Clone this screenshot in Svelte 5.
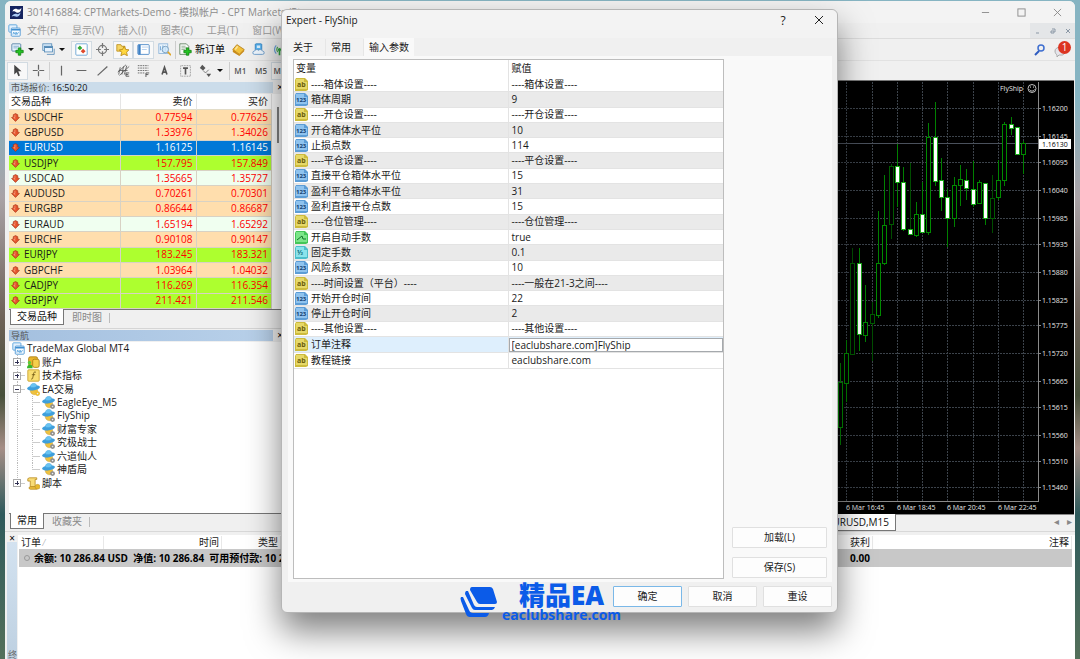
<script lang="ts">
	type Quote = { symbol: string; bid: string; ask: string; tone: 'peach' | 'green' | 'mint' | 'selected' };
	type Param = { kind: 'ab' | 'int' | 'bool' | 'real'; name: string; value: string };
	type TreeNode = { label: string; level: number; icon: string; toggle?: string; last?: boolean };

	const menus = ['文件(F)', '显示(V)', '插入(I)', '图表(C)', '工具(T)', '窗口(W)'];

	const panelTools = [
		{ icon: 'watch', label: '市场报价', on: true },
		{ icon: 'target', label: '数据窗口', on: false },
		{ icon: 'star', label: '导航', on: true },
		{ icon: 'terminal', label: '终端', on: true },
		{ icon: 'tester', label: '策略测试', on: false }
	];
	const serviceTools = [
		{ icon: 'gold', label: 'MetaEditor' },
		{ icon: 'cloud', label: '虚拟主机' },
		{ icon: 'signal', label: '信号' }
	];
	const lineTools = ['vline', 'hline', 'trend', 'channel', 'fibo', 'letter', 'label', 'arrows'];

	const quotes: Quote[] = [
		{ symbol: 'USDCHF', bid: '0.77594', ask: '0.77625', tone: 'peach' },
		{ symbol: 'GBPUSD', bid: '1.33976', ask: '1.34026', tone: 'peach' },
		{ symbol: 'EURUSD', bid: '1.16125', ask: '1.16145', tone: 'selected' },
		{ symbol: 'USDJPY', bid: '157.795', ask: '157.849', tone: 'green' },
		{ symbol: 'USDCAD', bid: '1.35665', ask: '1.35727', tone: 'mint' },
		{ symbol: 'AUDUSD', bid: '0.70261', ask: '0.70301', tone: 'peach' },
		{ symbol: 'EURGBP', bid: '0.86644', ask: '0.86687', tone: 'peach' },
		{ symbol: 'EURAUD', bid: '1.65194', ask: '1.65292', tone: 'mint' },
		{ symbol: 'EURCHF', bid: '0.90108', ask: '0.90147', tone: 'peach' },
		{ symbol: 'EURJPY', bid: '183.245', ask: '183.321', tone: 'green' },
		{ symbol: 'GBPCHF', bid: '1.03964', ask: '1.04032', tone: 'peach' },
		{ symbol: 'CADJPY', bid: '116.269', ask: '116.354', tone: 'green' },
		{ symbol: 'GBPJPY', bid: '211.421', ask: '211.546', tone: 'green' }
	];

	const tree: TreeNode[] = [
		{ label: 'TradeMax Global MT4', level: 0, icon: 'charts' },
		{ label: '账户', level: 1, icon: 'account', toggle: '+' },
		{ label: '技术指标', level: 1, icon: 'indicator', toggle: '+' },
		{ label: 'EA交易', level: 1, icon: 'expert', toggle: '-' },
		{ label: 'EagleEye_M5', level: 2, icon: 'expertOff' },
		{ label: 'FlyShip', level: 2, icon: 'expertOff' },
		{ label: '财富专家', level: 2, icon: 'expertOff' },
		{ label: '究极战士', level: 2, icon: 'expertOff' },
		{ label: '六道仙人', level: 2, icon: 'expertOff' },
		{ label: '神盾局', level: 2, icon: 'expertOff', last: true },
		{ label: '脚本', level: 1, icon: 'script', toggle: '+', last: true }
	];

	const params: Param[] = [
		{ kind: 'ab', name: '----箱体设置----', value: '----箱体设置----' },
		{ kind: 'int', name: '箱体周期', value: '9' },
		{ kind: 'ab', name: '----开仓设置----', value: '----开仓设置----' },
		{ kind: 'int', name: '开仓箱体水平位', value: '10' },
		{ kind: 'int', name: '止损点数', value: '114' },
		{ kind: 'ab', name: '----平仓设置----', value: '----平仓设置----' },
		{ kind: 'int', name: '直接平仓箱体水平位', value: '15' },
		{ kind: 'int', name: '盈利平仓箱体水平位', value: '31' },
		{ kind: 'int', name: '盈利直接平仓点数', value: '15' },
		{ kind: 'ab', name: '----仓位管理----', value: '----仓位管理----' },
		{ kind: 'bool', name: '开启自动手数', value: 'true' },
		{ kind: 'real', name: '固定手数', value: '0.1' },
		{ kind: 'int', name: '风险系数', value: '10' },
		{ kind: 'ab', name: '----时间设置（平台）----', value: '----一般在21-3之间----' },
		{ kind: 'int', name: '开始开仓时间', value: '22' },
		{ kind: 'int', name: '停止开仓时间', value: '2' },
		{ kind: 'ab', name: '----其他设置----', value: '----其他设置----' },
		{ kind: 'ab', name: '订单注释', value: '[eaclubshare.com]FlyShip' },
		{ kind: 'ab', name: '教程链接', value: 'eaclubshare.com' }
	];
	const striped = [1, 3, 5, 7, 9, 11, 13, 15];
	let editing = $state(17);
	let comment = $state('[eaclubshare.com]FlyShip');

	// x, high, body top, body bottom, low, filled, dim
	const candles: [number, number, number, number, number, number, number][] = [
		[840, 363, 382, 427, 445, 0, 0],
		[846, 340, 353, 383, 402, 0, 0],
		[852, 248, 263, 354, 354, 0, 1],
		[859, 248, 263, 334, 351, 1, 0],
		[865, 285, 322, 335, 342, 0, 0],
		[872, 302, 314, 323, 361, 0, 1],
		[878, 211, 263, 315, 318, 0, 0],
		[884, 175, 225, 263, 265, 0, 0],
		[891, 164, 166, 224, 239, 0, 1],
		[897, 144, 166, 182, 207, 1, 0],
		[903, 167, 182, 229, 231, 1, 0],
		[910, 163, 229, 234, 234, 1, 1],
		[916, 202, 214, 235, 237, 0, 0],
		[922, 182, 214, 232, 233, 1, 0],
		[928, 123, 137, 232, 235, 0, 0],
		[935, 102, 137, 181, 186, 1, 0],
		[941, 158, 180, 197, 211, 1, 0],
		[947, 189, 197, 218, 247, 1, 0],
		[954, 177, 185, 218, 227, 0, 0],
		[960, 165, 179, 185, 206, 0, 0],
		[966, 169, 180, 188, 200, 1, 0],
		[973, 161, 189, 204, 207, 1, 0],
		[979, 180, 182, 203, 203, 0, 0],
		[985, 183, 183, 218, 225, 1, 0],
		[992, 175, 198, 218, 233, 0, 1],
		[998, 160, 180, 197, 200, 0, 0],
		[1004, 122, 124, 180, 186, 0, 0],
		[1011, 117, 124, 128, 135, 1, 0],
		[1017, 127, 127, 154, 154, 1, 0],
		[1023, 141, 143, 154, 174, 0, 0]
	];
	const levels: [number, string][] = [
		[108, '1.16200'], [136, '1.16145'], [162, '1.16095'], [190, '1.16040'], [218, '1.15985'],
		[244, '1.15935'], [272, '1.15880'], [300, '1.15825'], [325, '1.15775'], [353, '1.15720'],
		[381, '1.15665'], [407, '1.15615'], [435, '1.15560'], [461, '1.15510'], [487, '1.15460']
	];
	const gridX = [846, 872, 897, 922, 947, 973, 998, 1023];
	const times: [number, string][] = [
		[846, '6 Mar 16:45'], [897, '6 Mar 18:45'], [947, '6 Mar 20:45'], [998, '6 Mar 22:45']
	];
</script>

{#snippet icon(name: string)}
	<svg class="icon" viewBox="0 0 16 16" fill="none" aria-hidden="true">
		{#if name === 'app'}
			<rect width="16" height="16" fill="#14235f" />
			<path d="M3 7c1-4 4-4 6-3 2 1 4 0 5-2 0 5-3 7-6 6-2-1-3-2-5-1z" fill="#fff" />
			<path d="M2 13c2-4 5-4 7-3 2 0 3-1 4-2-1 5-4 6-6 5-2-1-3-1-5 0z" fill="#a9c8f4" />
		{:else if name === 'charts'}
			<rect x="1" y="1" width="10" height="9" rx="1" fill="#e3f1fd" stroke="#4b9bd9" />
			<rect x="4" y="5" width="11" height="10" rx="1" fill="#f4faff" stroke="#3f8ed0" />
			<path d="M4 7h11" stroke="#3f8ed0" stroke-width="2" />
			<path d="M6 13l1-3 2 3 1-3 1 3 2-3" stroke="#4b9bd9" />
		{:else if name === 'newChart'}
			<rect x="1" y="1" width="11" height="9" rx="1" fill="#e6f2fc" stroke="#46769c" />
			<path d="M3 4h7M3 6h5" stroke="#7da7c8" />
			<path d="M9 6h3v3h3v3h-3v3H9v-3H6V9h3z" fill="#22c322" stroke="#128412" />
		{:else if name === 'profiles'}
			<rect x="1" y="1" width="11" height="8" fill="#dceefc" stroke="#5288b5" />
			<rect x="3" y="4" width="10" height="7" fill="#e6f2fd" stroke="#5288b5" />
			<path d="M3 5h10" stroke="#5288b5" stroke-width="2" />
			<path d="M6 14h9V7" stroke="#5288b5" />
		{:else if name === 'watch'}
			<rect x="1" y="1" width="14" height="14" rx="1" fill="#fff" stroke="#5d9cd0" />
			<path d="M6 3l3 3-3 3-3-3z" fill="#32a832" />
			<path d="M10 7l3 3-3 3-3-3z" fill="#e04a2c" />
		{:else if name === 'target'}
			<circle cx="8" cy="8" r="5" stroke="#777" stroke-width="1.5" />
			<path d="M8 0v6M8 10v6M0 8h6M10 8h6" stroke="#777" stroke-width="1.5" />
		{:else if name === 'star'}
			<path d="M1 2h5l1 2h4v6H1z" fill="#f6d563" stroke="#b98c18" />
			<path d="M10 4l2 4 4 .4-3 3 1 4.2-4-2-4 2 1-4.2-3-3 4-.4z" fill="#ffd83f" stroke="#b48412" />
		{:else if name === 'terminal'}
			<rect x="1" y="2" width="14" height="12" rx="1" fill="#fff" stroke="#3b7fc4" />
			<path d="M3 2v12" stroke="#3b7fc4" stroke-width="3" />
			<path d="M6 5h8M6 8h6" stroke="#a6c7ea" />
		{:else if name === 'tester'}
			<rect x="1" y="1" width="11" height="12" fill="#e8f3fc" stroke="#88b2d8" />
			<path d="M3 9V4m3 6V3m3 7V5" stroke="#5c9bd2" />
			<circle cx="9" cy="8" r="4" fill="#cfe9fb" fill-opacity=".8" stroke="#6e94b5" />
			<path d="M12 11l4 4" stroke="#e0a526" stroke-width="2" />
		{:else if name === 'order'}
			<path d="M1 1h8l3 3v10H1z" fill="#f7fbf7" stroke="#5a7a5a" />
			<path d="M3 4h5M3 6h7M3 8h4" stroke="#8aa58a" />
			<path d="M9 6h3v3h3v3h-3v3H9v-3H6V9h3z" fill="#22c322" stroke="#128412" />
		{:else if name === 'gold'}
			<path d="M1 8l5-6 9 6-6 6z" fill="#f3c23c" stroke="#b27a10" />
			<path d="M1 8v3l8 5 6-6V8l-6 6z" fill="#c98a16" />
			<path d="M4 8l3-4" stroke="#fbe49a" stroke-width="2" />
		{:else if name === 'cloud'}
			<rect x="4" y="1" width="8" height="8" rx="1" fill="#58b4f0" stroke="#2c7fc0" />
			<path d="M6 3h4v3H6z" fill="#d9f0ff" />
			<path d="M3 14a2 2 0 0 1 0-4 3 3 0 0 1 5-1 3 3 0 0 1 5 1 2 2 0 0 1 0 4z" fill="#eef6fd" stroke="#5b93c6" />
		{:else if name === 'signal'}
			<path d="M4 3a7 7 0 0 0 0 10M12 3a7 7 0 0 1 0 10" stroke="#6aa2dc" stroke-width="1.5" />
			<path d="M6 5a4 4 0 0 0 0 6M10 5a4 4 0 0 1 0 6" stroke="#4fae5c" stroke-width="1.5" />
			<circle cx="8" cy="8" r="2" fill="#2fa53f" />
			<path d="M8 9v6" stroke="#2fa53f" stroke-width="2" />
		{:else if name === 'cursor'}
			<path d="M4 1v12l3-3 2 5 2-1-2-5h4z" fill="#444" />
		{:else if name === 'cross'}
			<path d="M8 1v6M8 9v6M1 8h6M9 8h6" stroke="#666" stroke-width="1.5" />
		{:else if name === 'vline'}
			<path d="M8 2v12" stroke="#666" stroke-width="1.5" />
		{:else if name === 'hline'}
			<path d="M2 8h12" stroke="#666" stroke-width="1.5" />
		{:else if name === 'trend'}
			<path d="M2 14L14 3" stroke="#666" stroke-width="1.5" />
		{:else if name === 'channel'}
			<path d="M1 10L11 1M3 14L15 3M4 4l-2 9M8 3L6 13M12 2l-3 11M2 8h11" stroke="#555" />
			<path d="M11 11h4M11 13h3M11 15h4M11 11v4" stroke="#444" />
		{:else if name === 'fibo'}
			<path d="M1 2h13M1 5h13M1 8h13M1 11h8" stroke="#555" stroke-dasharray="2 1" />
			<path d="M11 11h4M11 13h3M11 11v5" stroke="#444" />
		{:else if name === 'letter'}
			<path d="M5 13L8 4l3 9M6 10h4" stroke="#555" stroke-width="2" />
		{:else if name === 'label'}
			<rect x="2" y="2" width="12" height="13" stroke="#777" stroke-dasharray="1 1" />
			<path d="M5 5h6M8 5v8" stroke="#555" stroke-width="2" />
		{:else if name === 'arrows'}
			<path d="M4 1l4 4-3 3-4-3z" fill="#555" />
			<path d="M5 8l3 3 4-4" stroke="#666" />
			<path d="M9 12h6l-3 4z" fill="#555" />
		{:else if name === 'account'}
			<rect x="2" y="1" width="11" height="11" rx="2" fill="#e8b52c" stroke="#a97a10" />
			<rect x="7" y="4" width="8" height="10" rx="2" fill="#f5cf4b" stroke="#a97a10" />
			<circle cx="3" cy="8" r="2" fill="#54cf3c" />
			<path d="M0 15c0-6 7-6 7 0z" fill="#36b82a" />
		{:else if name === 'indicator'}
			<rect x="1" y="1" width="14" height="14" rx="1" fill="#f8de72" stroke="#c79d23" />
			<path d="M11 4c-2-1-3 0-3 3l-1 4c0 1-1 2-2 1M6 7h4" stroke="#6c5210" />
		{:else if name === 'expert' || name === 'expertOff'}
			<path d="M4 9c0 6 7 7 9 3l0-4z" fill="#eec13f" stroke="#b98a1d" stroke-width=".5" />
			<ellipse cx="8" cy="6" rx="8" ry="3" fill="#3e9fdc" transform="rotate(-8 8 6)" />
			<path d="M4 5c0-6 8-6 8-1-2 2-6 2-8 1z" fill="#69c3f2" stroke="#3e9fdc" stroke-width=".5" />
			<circle cx="13" cy="13" r="3" fill={name === 'expert' ? '#efbd2c' : '#8d8d8d'} />
			<circle cx="13" cy="13" r="1" fill="#eee" />
		{:else if name === 'script'}
			<path d="M3 1h9v2h-2v9H4V5H1V2z" fill="#f8dc77" stroke="#b98a1d" />
			<path d="M4 12c-2 0-2 3 0 3h8v-3z" fill="#eec13f" stroke="#b98a1d" />
			<circle cx="13" cy="12" r="3" fill="#e7b82d" stroke="#ab8018" stroke-width=".5" />
		{:else if name === 'down'}
			<path d="M8 15L1 8l3-1V3l4-2 4 2v4l3 1z" fill="#e4522a" stroke="#9a2b12" />
			<path d="M7 3v5H5l3 3" stroke="#ffb79a" />
		{/if}
	</svg>
{/snippet}

{#snippet kindIcon(kind: string)}
	<svg class="icon kind-icon" viewBox="0 0 13 13" aria-hidden="true">
		{#if kind === 'ab'}
			<path d="M1 0h9l3 3v9l-2 1H0V2z" fill="#cdbb3c" />
			<path d="M1 1h8v3h3v7H1z" fill="#e6d868" />
			<text x="2" y="9" font-size="7" font-weight="700" fill="#6b5d0c">ab</text>
		{:else if kind === 'int'}
			<path d="M1 0h9l3 3v9l-2 1H0V2z" fill="#5c9dd6" />
			<path d="M1 1h8v3h3v7H1z" fill="#8fc3ee" />
			<text x="1" y="9" font-size="6" font-weight="700" fill="#14406e">123</text>
		{:else if kind === 'bool'}
			<path d="M1 0h9l3 3v9l-2 1H0V2z" fill="#43c657" />
			<path d="M1 1h8v3h3v7H1z" fill="#7be588" />
			<path d="M2 9l5-4 1 3h3" fill="none" stroke="#12742a" />
		{:else}
			<path d="M1 0h9l3 3v9l-2 1H0V2z" fill="#4dbecb" />
			<path d="M1 1h8v3h3v7H1z" fill="#8be3ec" />
			<text x="2" y="9" font-size="7" font-weight="700" fill="#14707c">½</text>
		{/if}
	</svg>
{/snippet}

<div class="desktop">
	<div class="window">
		<header class="titlebar">
			{@render icon('app')}
			<h1>301416884: CPTMarkets-Demo - 模拟帐户 - CPT Markets (Pty</h1>
			<div class="window-buttons">
				<button aria-label="最小化"><svg viewBox="0 0 10 10"><path d="M1 5h8" /></svg></button>
				<button aria-label="最大化"><svg viewBox="0 0 10 10"><rect x="1" y="1" width="8" height="8" /></svg></button>
				<button aria-label="关闭"><svg viewBox="0 0 10 10"><path d="M1 1l8 8M9 1L1 9" /></svg></button>
			</div>
		</header>

		<nav class="menubar">
			{@render icon('charts')}
			{#each menus as menu}
				<button>{menu}</button>
			{/each}
			<div class="child-buttons">
				<button aria-label="最小化图表"><svg viewBox="0 0 6 6"><path d="M1 5h3" /></svg></button>
				<button aria-label="还原图表"><svg viewBox="0 0 6 6"><path d="M1 3h3v2H1zM2 1h3v3" /></svg></button>
				<button aria-label="关闭图表"><svg viewBox="0 0 6 6"><path d="M1 1l4 4M5 1L1 5" /></svg></button>
			</div>
		</nav>

		<div class="toolbar">
			<button class="drop" aria-label="新图表">{@render icon('newChart')}<i class="caret"></i></button>
			<button class="drop" aria-label="配置文件">{@render icon('profiles')}<i class="caret"></i></button>
			<div class="tools tools--panels">
				{#each panelTools as tool}
					<button class="tool" class:tool--on={tool.on} aria-label={tool.label}>{@render icon(tool.icon)}</button>
				{/each}
			</div>
			<button class="order">{@render icon('order')}新订单</button>
			<div class="tools tools--services">
				{#each serviceTools as tool}
					<button class="tool" aria-label={tool.label}>{@render icon(tool.icon)}</button>
				{/each}
			</div>
			<div class="toolbar__right">
				<button aria-label="搜索">
					<svg class="search" viewBox="0 0 12 12" fill="none">
						<circle cx="7" cy="4" r="3" stroke="#3f6fd0" stroke-width="1.5" />
						<path d="M5 7l-4 4" stroke="#2f5cc0" stroke-width="2" />
					</svg>
				</button>
				<button class="chat" aria-label="消息">
					<svg viewBox="0 0 12 12"><path d="M1 5c0-5 10-5 10 0s-4 4-6 4l-2 2V9C2 8 1 7 1 5z" fill="#e4e4ea" stroke="#aaa" /></svg>
					<span class="badge">1</span>
				</button>
			</div>
		</div>

		<div class="toolbar toolbar--lines">
			<div class="tools tools--pointer">
				<button class="tool tool--on" aria-label="光标">{@render icon('cursor')}</button>
				<button class="tool" aria-label="十字线">{@render icon('cross')}</button>
			</div>
			<div class="tools tools--lines">
				{#each lineTools as tool}
					<button class="tool" aria-label={tool}>{@render icon(tool)}</button>
				{/each}
			</div>
			<i class="caret"></i>
			<div class="tools tools--periods">
				<button class="tool">M1</button>
				<button class="tool">M5</button>
				<button class="tool tool--on">M15</button>
			</div>
		</div>

		<div class="workspace">
			<aside class="sidebar">
				<section class="market">
					<div class="panel-title">
						<h2>市场报价: <b>16:50:20</b></h2>
						<button aria-label="关闭市场报价">×</button>
					</div>
					<div class="market__body">
						<table class="quotes">
							<thead>
								<tr><th>交易品种</th><th>卖价</th><th>买价</th></tr>
							</thead>
							<tbody>
								{#each quotes as quote}
									<tr class="quote quote--{quote.tone}">
										<td><span class="symbol">{@render icon('down')}{quote.symbol}</span></td>
										<td>{quote.bid}</td>
										<td>{quote.ask}</td>
									</tr>
								{/each}
							</tbody>
						</table>
						<div class="scrollbar"></div>
					</div>
					<div class="tabs">
						<button class="tab tab--active">交易品种</button>
						<button class="tab">即时图</button>
					</div>
				</section>

				<section class="navigator">
					<div class="panel-title panel-title--blue">
						<h2>导航</h2>
						<button aria-label="关闭导航">×</button>
					</div>
					<div class="navigator__body">
						<ul class="tree">
							{#each tree as node}
								<li class:last={node.last}>
									{#if node.level > 0}
										<span class="stem" class:stem--through={node.level === 2}>
											{#if node.toggle}<button class="toggle" class:toggle--open={node.toggle === '-'} aria-label={node.label}></button>{/if}
										</span>
									{/if}
									{#if node.level > 1}<span class="stem"></span>{/if}
									{@render icon(node.icon)}
									<span>{node.label}</span>
								</li>
							{/each}
						</ul>
					</div>
					<div class="tabs">
						<button class="tab tab--active">常用</button>
						<button class="tab">收藏夹</button>
					</div>
				</section>
			</aside>

			<section class="chart">
				<div class="chart__canvas">
					<svg width="242" height="433" viewBox="832 81 242 433" shape-rendering="crispEdges">
						<g class="grid">
							{#each levels as [y]}
								<path d="M832 {y}.5H1038" />
							{/each}
							{#each gridX as x}
								<path d="M{x}.5 82V501" />
							{/each}
						</g>
						<path d="M832 143.5H1038" stroke="#4a515c" />
						<path d="M1038.5 82V501.5H832" fill="none" stroke="#8a8a8a" />
						{#each candles as [x, high, top, bottom, low, filled, dim]}
							<path d="M{x}.5 {high}V{low}" stroke={dim ? '#004d00' : '#008000'} />
							<rect
								x={x - 2 + 0.5}
								y={top + 0.5}
								width="4"
								height={bottom - top}
								fill={filled ? '#fff' : '#000'}
								stroke={filled ? '#18a818' : dim ? '#005a00' : '#008a00'}
							/>
						{/each}
						<g class="scale">
							{#each levels as [y, price]}
								<path d="M1038 {y}.5h3" stroke="#8a8a8a" />
								<text x="1042" y={y + 3}>{price}</text>
							{/each}
							{#each times as [x, time]}
								<text {x} y="510">{time}</text>
							{/each}
							<rect x="1039" y="139" width="32" height="10" fill="#fff" />
							<text class="scale__now" x="1042" y="147">1.16130</text>
							<text x="1000" y="91">FlyShip</text>
						</g>
						<g fill="none" stroke="#eee" stroke-width=".8" shape-rendering="geometricPrecision">
							<circle cx="1032" cy="88.5" r="4" />
							<path d="M1029.500 89.500c1 2 4 2 5 0M1030.500 86.500v1.200M1033.500 86.500v1.200" />
						</g>
					</svg>
				</div>
				<div class="chart__tabs">
					<button class="tab tab--active">EURUSD,M15</button>
					<div class="chart__arrows">
						<button aria-label="向左">◂</button>
						<button aria-label="向右">▸</button>
					</div>
				</div>
			</section>
		</div>

		<section class="terminal">
			<div class="terminal__strip">
				<button aria-label="关闭终端">×</button>
				<span>终端</span>
			</div>
			<table class="orders">
				<colgroup>
					<col class="orders__id" /><col class="orders__time" /><col class="orders__type" />
					<col /><col class="orders__profit" /><col class="orders__note" />
				</colgroup>
				<thead>
					<tr>
						<th>订单 <small>⁄</small></th><th>时间</th><th>类型</th><th></th><th>获利</th><th>注释</th>
					</tr>
				</thead>
				<tbody>
					<tr>
						<td colspan="4"><i class="dot"></i>余额: 10 286.84 USD&nbsp; 净值: 10 286.84&nbsp; 可用预付款: 10 286.84</td>
						<td>0.00</td>
						<td></td>
					</tr>
				</tbody>
			</table>
		</section>
	</div>

	<div class="dialog" role="dialog" aria-labelledby="dialog-title">
		<header class="dialog__title">
			<h2 id="dialog-title">Expert - FlyShip</h2>
			<button aria-label="帮助">?</button>
			<button aria-label="关闭">
				<svg viewBox="0 0 10 10"><path d="M1 1l8 8M9 1L1 9" /></svg>
			</button>
		</header>
		<div class="dialog__tabs">
			<button>关于</button>
			<button>常用</button>
			<button class="active">输入参数</button>
		</div>
		<div class="dialog__body">
			<div class="inputs">
				<table>
					<thead>
						<tr><th>变量</th><th>赋值</th></tr>
					</thead>
					<tbody>
						{#each params as param, i}
							<tr class:striped={striped.includes(i)} class:editing={editing === i} onclick={() => (editing = i)}>
								<td><span class="param">{@render kindIcon(param.kind)}{param.name}</span></td>
								<td>
									{#if i === 17}
										<input aria-label={param.name} bind:value={comment} />
									{:else}
										{param.value}
									{/if}
								</td>
							</tr>
						{/each}
					</tbody>
				</table>
			</div>
			<div class="dialog__side">
				<button class="push">加载(L)</button>
				<button class="push">保存(S)</button>
			</div>
		</div>
		<footer class="dialog__footer">
			<button class="push push--default">确定</button>
			<button class="push">取消</button>
			<button class="push">重设</button>
		</footer>
	</div>

	<div class="brand">
		<svg viewBox="0 0 38 32" fill="#0b5be8" aria-hidden="true">
			<path d="M12 1h18q2 0 3 2l4 13q0 2-2 2H20q-2 0-3-2L10 4q0-3 2-3z" />
			<path d="M6 5h2l6 14q1 2 3 2h18q-1 3-3 3H15q-2 0-3-2L5 8q0-2 1-3z" />
			<path d="M1 11h2l6 13q1 3 4 3h16q-1 4-4 4H10q-3 0-4-3L1 15q-1-3 0-4z" />
		</svg>
		<p><strong>精品EA</strong><span>eaclubshare.com</span></p>
	</div>
</div>

<style>
	:global(body) {
		margin: 0;
	}

	.desktop {
		position: relative;
		box-sizing: border-box;
		height: 100vh;
		padding: 1px 5px 0;
		overflow: hidden;
		background: linear-gradient(#86b4c2 0 15%, #a9a2a6 30%, #6e6258 48%, #47503a 60%, #a58e86 68%, #2e5a5c 78%, #54705a 100%);
		color: #1a1a1a;
		font: 10px/13px 'Open Sans', 'Noto Sans CJK SC', sans-serif;
	}

	button,
	input {
		margin: 0;
		border: 0;
		padding: 0;
		background: none;
		color: inherit;
		font: inherit;
	}

	h1,
	h2,
	p,
	ul {
		margin: 0;
		padding: 0;
		font: inherit;
		list-style: none;
	}

	table {
		border-spacing: 0;
	}

	th,
	td {
		padding: 0;
		font-weight: 400;
		white-space: nowrap;
	}

	.icon {
		display: block;
		flex: none;
		width: 13px;
		height: 13px;
	}

	.window {
		display: flex;
		height: 100%;
		flex-direction: column;
		overflow: hidden;
		border-radius: 6px 6px 0 0;
		background: #f0f0f0;
	}

	.titlebar {
		display: flex;
		height: 22px;
		flex: none;
		align-items: center;
		gap: 4px;
		padding-left: 5px;
		background: #f3f3f3;
		color: #8c8c8c;
	}

	.titlebar h1 {
		flex: 1;
	}

	.window-buttons {
		display: flex;
	}

	.window-buttons button {
		display: grid;
		width: 36px;
		place-items: center;
	}

	.window-buttons svg {
		width: 9px;
		fill: none;
		stroke: #888;
	}

	.menubar {
		display: flex;
		height: 15px;
		flex: none;
		align-items: center;
		gap: 14px;
		border-bottom: 1px solid #dcdcdc;
		padding-left: 3px;
		color: #999;
	}

	.menubar .icon {
		margin-right: -8px;
	}

	.child-buttons {
		display: flex;
		align-self: stretch;
		margin-left: auto;
		background: #e4e6e8;
	}

	.child-buttons button {
		display: grid;
		width: 15px;
		place-items: center;
	}

	.child-buttons svg {
		width: 6px;
		fill: none;
		stroke: #8a97a5;
	}

	.toolbar {
		display: flex;
		height: 21px;
		flex: none;
		align-items: center;
		gap: 3px;
		padding-left: 4px;
	}

	.toolbar--lines {
		height: 20px;
		border-top: 1px solid #e2e2e2;
		box-sizing: border-box;
		padding-left: 2px;
	}

	.drop {
		display: flex;
		width: 28px;
		align-items: center;
		gap: 4px;
		padding-left: 2px;
		box-sizing: border-box;
	}

	.caret {
		border: 3px solid transparent;
		border-top-color: #111;
		border-bottom: 0;
	}

	.tools {
		display: grid;
		grid-auto-columns: 1fr;
		grid-auto-flow: column;
	}

	.tools--panels {
		width: 104px;
		border-right: 1px solid #ccc;
	}

	.tools--services {
		width: 62px;
	}

	.tools--pointer {
		width: 42px;
		border-right: 1px solid #d0d0d0;
	}

	.tools--lines {
		width: 165px;
		margin-left: -2px;
	}

	.toolbar--lines .caret {
		margin: 0 3px 0 -2px;
	}

	.tools--periods {
		width: 62px;
		border-left: 1px solid #ccc;
		color: #555;
		font-size: 8px;
		font-weight: 600;
	}

	.tool {
		display: grid;
		height: 18px;
		place-items: center;
	}

	.tool--on {
		border: 1px solid #d2dbe2;
		background: #f8f8f8;
	}

	.order {
		display: flex;
		align-items: center;
		gap: 3px;
		color: #000;
	}

	.toolbar__right {
		display: flex;
		align-items: center;
		gap: 8px;
		margin-left: auto;
		padding-right: 4px;
	}

	.search {
		display: block;
		width: 12px;
	}

	.chat {
		position: relative;
		width: 17px;
		height: 17px;
	}

	.chat svg {
		position: absolute;
		bottom: 0;
		left: 0;
		width: 12px;
	}

	.badge {
		position: absolute;
		top: 0;
		right: 0;
		width: 13px;
		border-radius: 50%;
		background: #dc3522;
		color: #fff;
		text-align: center;
	}

	.workspace {
		display: flex;
		flex: none;
		border-bottom: 1px solid #d8d8d8;
	}

	.sidebar {
		width: 281px;
		flex: none;
		box-sizing: border-box;
		padding: 1px 0 2px 4px;
	}

	.panel-title {
		display: flex;
		height: 13px;
		align-items: center;
		justify-content: space-between;
	}

	.panel-title h2 {
		width: 264px;
		background: #cbdcea;
		color: #555;
		font-size: 9px;
		line-height: 11px;
		text-indent: 2px;
	}

	.panel-title--blue h2 {
		background: linear-gradient(90deg, #a4c0df, #b9d1ea);
	}

	.panel-title b {
		color: #111;
		font-weight: 400;
	}

	.panel-title button {
		padding-right: 3px;
		color: #000;
	}

	.market__body {
		display: flex;
		gap: 5px;
		border-bottom: 1px solid #777;
		background: #fff;
	}

	.scrollbar {
		width: 2px;
		height: 36px;
		margin-top: 13px;
		background: #858585;
	}

	.quotes {
		width: 263px;
		height: 215px;
		table-layout: fixed;
		color: #f00;
		text-align: right;
	}

	.quotes th {
		height: 15px;
		border-right: 1px solid #e5e5e5;
		border-bottom: 1px solid #e2dcc8;
		padding-right: 3px;
		color: #222;
	}

	.quotes th:first-child {
		width: 106px;
		padding-left: 2px;
		text-align: left;
	}

	.quotes td {
		border-right: 1px solid #d8d2c4;
		border-bottom: 1px solid #d8d2c4;
		padding: 0 3px 0 2px;
		line-height: 13px;
	}

	.symbol {
		display: flex;
		align-items: center;
		gap: 4px;
		color: #1a1a1a;
	}

	.symbol .icon {
		width: 9px;
		height: 9px;
	}

	.quote--peach {
		background: #ffdead;
	}

	.quote--green {
		background: #adff2f;
	}

	.quote--mint {
		background: #f0fff0;
	}

	.quote--selected,
	.quote--selected .symbol {
		background: #0078d7;
		color: #fff;
	}

	.tabs {
		display: flex;
		height: 15px;
		padding-left: 1px;
	}

	.tab {
		position: relative;
		padding: 0 8px;
		color: #888;
	}

	.tab--active {
		margin-top: -1px;
		border: solid #777;
		border-width: 0 1px 1px;
		padding: 0 6px;
		background: #fff;
		color: #111;
	}

	.tabs .tab:not(.tab--active)::after {
		position: absolute;
		top: 3px;
		right: 0;
		height: 10px;
		border-right: 1px solid #bbb;
		content: '';
	}

	.navigator {
		margin-top: 3px;
		border-top: 1px solid #d5d5d5;
	}

	.navigator__body {
		min-height: 171px;
		border-bottom: 1px solid #777;
		background: #fff;
	}

	.tree {
		display: grid;
		height: 148px;
		grid-auto-rows: 1fr;
		padding-left: 3px;
	}

	.tree li {
		display: flex;
		min-height: 0;
		align-items: center;
		gap: 2px;
	}

	.stem {
		display: grid;
		width: 13px;
		height: 100%;
		align-items: center;
		background:
			linear-gradient(#ccc, #ccc) 5px 50% / 8px 1px no-repeat,
			repeating-linear-gradient(#bbb 0 1px, transparent 1px 2px) 5px 0 / 1px 100% no-repeat;
	}

	.stem--through {
		background: repeating-linear-gradient(#bbb 0 1px, transparent 1px 2px) 5px 0 / 1px 100% no-repeat;
	}

	.last .stem:not(.stem--through) {
		background-size: 8px 1px, 1px 50%;
	}

	.toggle {
		width: 8px;
		height: 8px;
		margin-left: 1px;
		border: 1px solid #aaa;
		background:
			linear-gradient(#335, #335) center / 4px 1px no-repeat,
			linear-gradient(#335, #335) center / 1px 4px no-repeat,
			#fff;
	}

	.toggle--open {
		background: linear-gradient(#335, #335) center / 4px 1px no-repeat, #fff;
	}

	.chart {
		display: flex;
		min-width: 0;
		flex: 1;
		flex-direction: column;
		padding-right: 1px;
	}

	.chart__canvas {
		display: flex;
		justify-content: flex-end;
		border-top: 1px solid #777;
		background: #000;
	}

	.chart__canvas svg {
		display: block;
	}

	.grid path {
		stroke: #3c434b;
		stroke-dasharray: 2 1;
	}

	.scale text {
		fill: #e6e6e6;
		font-size: 7px;
	}

	.scale .scale__now {
		fill: #000;
	}

	.chart__tabs {
		display: flex;
		flex: 1;
		align-items: flex-start;
		justify-content: flex-end;
		border-top: 1px solid #888;
	}

	.chart__tabs .tab--active {
		height: 17px;
	}

	.chart__arrows {
		display: flex;
		width: 178px;
		justify-content: flex-end;
		gap: 8px;
		padding-right: 2px;
		box-sizing: border-box;
		color: #888;
	}

	.terminal {
		display: flex;
		min-height: 0;
		flex: 1;
		align-items: flex-start;
		gap: 2px;
		padding: 2px 3px 0 2px;
		background: linear-gradient(90deg, #f0f0f0 13px, #fff 13px);
		box-shadow: inset 0 3px #f0f0f0;
	}

	.terminal__strip {
		display: flex;
		width: 10px;
		height: 100%;
		flex-direction: column;
		align-items: center;
		color: #666;
	}

	.terminal__strip button {
		height: 12px;
		color: #000;
		line-height: 8px;
	}

	.terminal__strip span {
		flex: 1;
		box-sizing: border-box;
		width: 10px;
		padding-top: 108px;
		background: linear-gradient(#d3e2f0, #bccfe0);
		font-size: 9px;
		line-height: 10px;
		white-space: nowrap;
		writing-mode: vertical-rl;
	}

	.orders {
		min-width: 0;
		flex: 1;
		height: 31px;
		margin-top: 2px;
		table-layout: fixed;
	}

	.orders__id {
		width: 85px;
	}

	.orders__time {
		width: 118px;
	}

	.orders__type {
		width: 59px;
	}

	.orders__profit {
		width: 44px;
	}

	.orders__note {
		width: 199px;
	}

	.orders th {
		border-right: 1px solid #e8e8e8;
		padding-right: 2px;
		text-align: right;
	}

	.orders th:first-child {
		padding-left: 2px;
		text-align: left;
	}

	.orders small {
		color: #aaa;
	}

	.orders td {
		overflow: hidden;
		background: #c8c8c8;
		color: #000;
		font-weight: 700;
	}

	.orders td:nth-child(2) {
		padding-right: 3px;
		text-align: right;
	}

	.dot {
		display: inline-block;
		width: 4px;
		height: 4px;
		margin: 0 4px 1px 5px;
		border: 1px solid #999;
		border-radius: 50%;
	}

	.dialog {
		position: absolute;
		top: 9px;
		left: 281px;
		width: 557px;
		box-sizing: border-box;
		border: 1px solid #b5b5b5;
		border-radius: 6px;
		padding: 0 5px 5px 6px;
		background: #f0f0f0;
		box-shadow: 0 18px 34px rgb(0 0 0 / 50%);
	}

	.dialog__title {
		display: flex;
		height: 28px;
		margin: 0 -5px 0 -6px;
		border-radius: 6px 6px 0 0;
		background: #f3f3f3;
	}

	.dialog__title h2 {
		flex: 1;
		padding-left: 4px;
		line-height: 20px;
	}

	.dialog__title button {
		display: grid;
		width: 36px;
		height: 20px;
		place-items: center;
		font-size: 12px;
	}

	.dialog__title svg {
		width: 10px;
		fill: none;
		stroke: #222;
	}

	.dialog__tabs {
		display: flex;
		height: 18px;
		align-items: flex-end;
	}

	.dialog__tabs button {
		height: 17px;
		border-right: 1px solid #e6e6e6;
		padding: 0 12px 0 5px;
		background: #f2f2f2;
	}

	.dialog__tabs .active {
		height: 18px;
		border: 0;
		padding: 0 5px;
		background: #f9f9f9;
	}

	.dialog__body {
		display: flex;
		gap: 8px;
		padding: 3px 5px 3px;
		background: #f9f9f9;
	}

	.inputs {
		min-width: 0;
		min-height: 518px;
		flex: 1;
		border: 1px solid #bdbdbd;
		background: #fff;
	}

	.inputs table {
		width: 100%;
		height: 309px;
		table-layout: fixed;
		text-align: left;
	}

	.inputs th {
		height: 17px;
		padding-left: 3px;
	}

	.inputs td {
		border-bottom: 1px solid #e3e3e3;
		padding-left: 3px;
	}

	.inputs td:first-child,
	.inputs th:first-child {
		border-right: 1px solid #e3e3e3;
		padding-left: 2px;
	}

	.inputs td:first-child {
		padding-left: 1px;
	}

	.inputs .striped {
		background: #eaeaea;
	}

	.inputs .editing {
		background: #deeffd;
	}

	.param {
		display: flex;
		align-items: center;
		gap: 3px;
	}

	.inputs td:has(input) {
		padding: 0;
	}

	.inputs input {
		display: block;
		width: 100%;
		height: 14px;
		box-sizing: border-box;
		border: 1px solid #a5a9ad;
		padding: 0 2px;
		background: #fff;
	}

	.dialog__side {
		display: flex;
		width: 95px;
		flex-direction: column;
		justify-content: flex-end;
		gap: 9px;
		padding-bottom: 1px;
	}

	.push {
		height: 21px;
		border: 1px solid #e0e0e0;
		border-radius: 1px;
		background: #fdfdfd;
	}

	.push--default {
		border-color: #7ab8e8;
	}

	.dialog__footer {
		display: flex;
		justify-content: flex-end;
		gap: 6px;
		padding-top: 4px;
	}

	.dialog__footer .push {
		width: 69px;
	}

	.brand {
		position: absolute;
		top: 582px;
		left: 460px;
		display: flex;
		align-items: center;
		gap: 4px;
		color: #0b5be8;
		font-weight: 700;
	}

	.brand svg {
		width: 38px;
	}

	.brand p {
		display: grid;
		justify-items: center;
		font-weight: 700;
	}

	.brand strong {
		font-size: 26px;
		line-height: 26px;
	}

	.brand span {
		font-size: 14px;
		line-height: 14px;
	}
</style>
